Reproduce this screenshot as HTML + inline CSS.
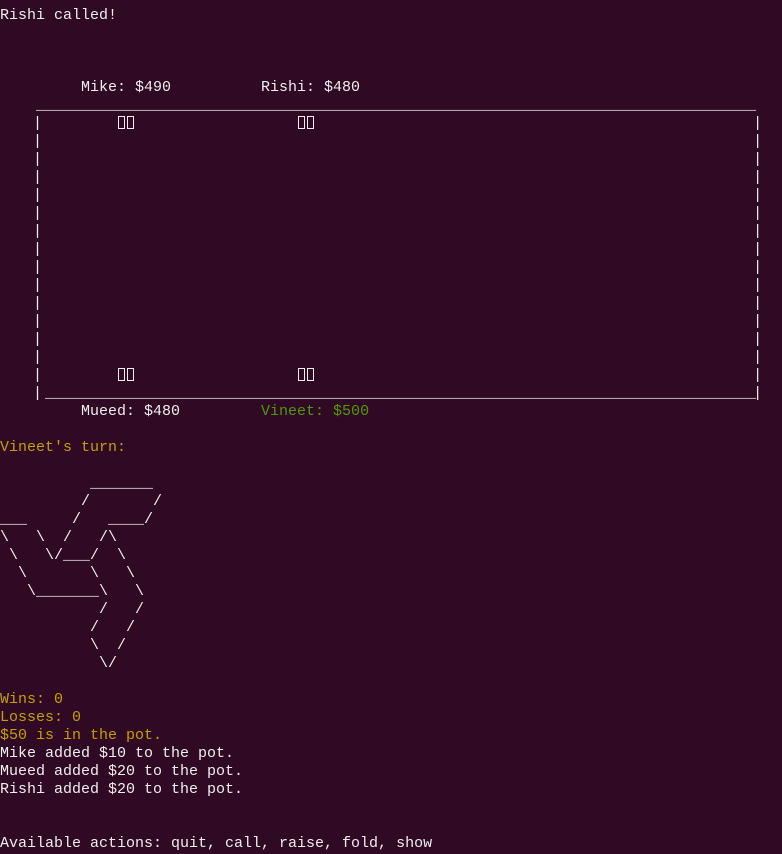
<!DOCTYPE html>
<html><head><meta charset="utf-8"><style>
html,body{margin:0;padding:0;background:#300a24;}
body{width:782px;height:854px;overflow:hidden;}
pre{margin:0;padding:7px 0 0 0;font-family:"Liberation Mono",monospace;font-size:15px;line-height:18px;color:#eeeeec;white-space:pre;}
.y{color:#c4a000}.g{color:#4e9a06}
.p{position:relative;left:-3px}
.c{display:inline-block;width:9px;height:12px;position:relative;vertical-align:-1px}
.c::after{content:"";position:absolute;left:1px;top:0;width:5px;height:11px;border:1px solid #eeeeec;}
</style></head><body><pre>Rishi called!



         Mike: $490          Rishi: $480
    ________________________________________________________________________________
    <span class="p">|</span>        <span class="c"></span><span class="c"></span>                  <span class="c"></span><span class="c"></span>                                                 <span class="p">|</span>
    <span class="p">|</span>                                                                               <span class="p">|</span>
    <span class="p">|</span>                                                                               <span class="p">|</span>
    <span class="p">|</span>                                                                               <span class="p">|</span>
    <span class="p">|</span>                                                                               <span class="p">|</span>
    <span class="p">|</span>                                                                               <span class="p">|</span>
    <span class="p">|</span>                                                                               <span class="p">|</span>
    <span class="p">|</span>                                                                               <span class="p">|</span>
    <span class="p">|</span>                                                                               <span class="p">|</span>
    <span class="p">|</span>                                                                               <span class="p">|</span>
    <span class="p">|</span>                                                                               <span class="p">|</span>
    <span class="p">|</span>                                                                               <span class="p">|</span>
    <span class="p">|</span>                                                                               <span class="p">|</span>
    <span class="p">|</span>                                                                               <span class="p">|</span>
    <span class="p">|</span>        <span class="c"></span><span class="c"></span>                  <span class="c"></span><span class="c"></span>                                                 <span class="p">|</span>
    <span class="p">|</span>_______________________________________________________________________________<span class="p">|</span>
         Mueed: $480         <span class="g">Vineet: $500</span>

<span class="y">Vineet's turn:</span>

          _______
         /       /
___     /   ____/
\   \  /   /\
 \   \/___/  \
  \       \   \
   \_______\   \
           /   /
          /   /
          \  /
           \/

<span class="y">Wins: 0
Losses: 0
$50 is in the pot.</span>
Mike added $10 to the pot.
Mueed added $20 to the pot.
Rishi added $20 to the pot.


Available actions: quit, call, raise, fold, show</pre></body></html>
